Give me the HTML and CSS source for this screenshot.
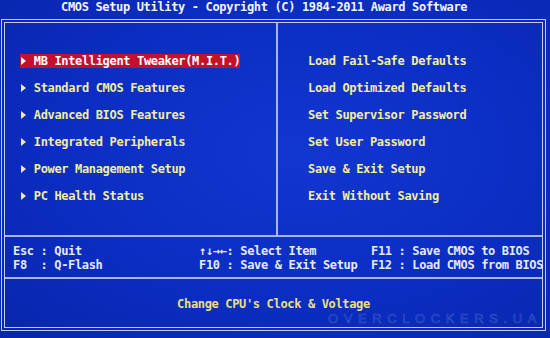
FILE: index.html
```html
<!DOCTYPE html>
<html>
<head>
  <meta charset="UTF-8">
  <title>CMOS Setup Utility</title>
  <link rel="stylesheet" href="styles.css">
</head>
<body>
  <div class="title">CMOS Setup Utility - Copyright (C) 1984-2011 Award Software</div>
  <div class="frame">
    <div class="menu">
      <ul class="menu-col menu-left">
        <li class="item selected"><span class="arrow"></span>MB Intelligent Tweaker(M.I.T.)</li>
        <li class="item"><span class="arrow"></span>Standard CMOS Features</li>
        <li class="item"><span class="arrow"></span>Advanced BIOS Features</li>
        <li class="item"><span class="arrow"></span>Integrated Peripherals</li>
        <li class="item"><span class="arrow"></span>Power Management Setup</li>
        <li class="item"><span class="arrow"></span>PC Health Status</li>
      </ul>
      <ul class="menu-col menu-right">
        <li class="item">Load Fail-Safe Defaults</li>
        <li class="item">Load Optimized Defaults</li>
        <li class="item">Set Supervisor Password</li>
        <li class="item">Set User Password</li>
        <li class="item">Save &amp; Exit Setup</li>
        <li class="item">Exit Without Saving</li>
      </ul>
    </div>
    <div class="keys">
      <span>Esc : Quit</span>
      <span>↑↓→←: Select Item</span>
      <span>F11 : Save CMOS to BIOS</span>
      <span>F8  : Q-Flash</span>
      <span>F10 : Save &amp; Exit Setup</span>
      <span>F12 : Load CMOS from BIOS</span>
    </div>
    <div class="status">
      Change CPU's Clock &amp; Voltage
      <span class="watermark">OVERCLOCKERS.UA</span>
    </div>
  </div>
</body>
</html>
```

FILE: styles.css
```css
html {
  background: #0a2ab8;
}
body {
  margin: 0;
  width: 550px;
  height: 338px;
  overflow: hidden;
  background: radial-gradient(ellipse at 55% 45%, #1236d0 0%, #0b2dc2 55%, #0826ac 100%);
  font-family: 'DejaVu Sans Mono', 'Liberation Mono', monospace;
  font-weight: bold;
  font-size: 12px;
  letter-spacing: -0.34px;
  line-height: 14px;
  color: #e6eaf8;
}
.title {
  height: 19px;
  padding-left: 61px;
  color: #f2f4ff;
  white-space: pre;
}
.frame {
  margin-left: 1px;
  width: 545px;
  height: 312px;
  box-sizing: border-box;
  border: 4px double #c8cceb;
  display: flex;
  flex-direction: column;
}
.menu {
  display: grid;
  grid-template-columns: 273px 1fr;
  height: 212px;
  border-bottom: 2px solid #aab4e6;
}
.menu-col {
  list-style: none;
  margin: 0;
  padding: 31px 0 0 0;
  display: flex;
  flex-direction: column;
  align-items: flex-start;
  gap: 13px;
}
.menu-left {
  padding-left: 15px;
  border-right: 2px solid #aab4e6;
}
.menu-right {
  padding-left: 30px;
}
.item {
  display: inline-flex;
  align-items: center;
  height: 14px;
  color: #f2ee9e;
  white-space: pre;
}
.item.selected {
  background: #c4102c;
  color: #ffffff;
}
.arrow {
  width: 13.77px;
  height: 14px;
  display: inline-flex;
  align-items: center;
  padding-left: 1px;
  box-sizing: border-box;
}
.arrow::before {
  content: "";
  border-left: 5px solid currentColor;
  border-top: 4px solid transparent;
  border-bottom: 4px solid transparent;
}
.keys {
  display: grid;
  grid-template-columns: 186px 172px auto;
  padding: 7px 0 5px 8px;
  border-bottom: 2px solid #aab4e6;
  white-space: pre;
}
.status {
  position: relative;
  flex: 1;
  padding-top: 18px;
  box-sizing: border-box;
  text-align: center;
  color: #ece07a;
}
.watermark {
  position: absolute;
  left: 323px;
  top: 34px;
  font-family: 'Liberation Sans', sans-serif;
  font-size: 13px;
  font-weight: normal;
  letter-spacing: 5.6px;
  line-height: 12px;
  color: transparent;
  -webkit-text-stroke: 0.6px rgba(150, 170, 235, 0.35);
}
```
